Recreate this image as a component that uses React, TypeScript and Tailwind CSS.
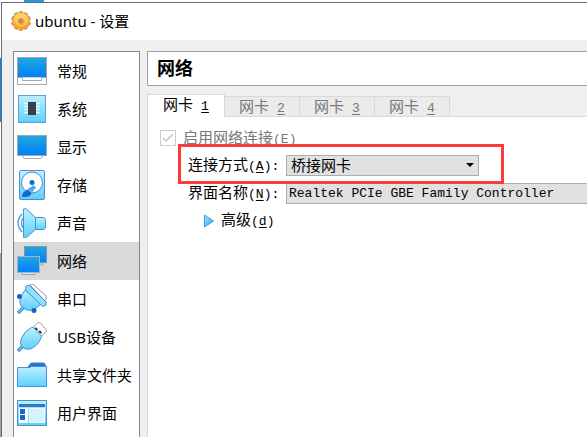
import React, { useState } from "react";

const sky = "#bdf1fd";
const cyan = "#5ccffb";
const edge = "#4a90d0";

function Defs() {
  return (
    <svg width="0" height="0" className="absolute" aria-hidden="true">
      <defs>
        <linearGradient id="screen" x1="0" y1="0" x2="0" y2="1">
          <stop offset="0" stopColor="#23a6e0" />
          <stop offset="1" stopColor="#0080fa" />
        </linearGradient>
        <linearGradient id="ice" x1="0" y1="0" x2="0" y2="1">
          <stop offset="0" stopColor={sky} />
          <stop offset="1" stopColor={cyan} />
        </linearGradient>
        <linearGradient id="arrow" x1="0" y1="0" x2="1" y2="1">
          <stop offset="0" stopColor="#a8ecfd" />
          <stop offset="1" stopColor="#2a9df0" />
        </linearGradient>
        <linearGradient id="gear" x1="0" y1="0" x2="0" y2="1">
          <stop offset="0" stopColor="#ffdc68" />
          <stop offset="1" stopColor="#f49a26" />
        </linearGradient>
      </defs>
    </svg>
  );
}

const icons: Record<string, React.ReactNode> = {
  general: (
    <>
      <rect x="0.5" y="1.5" width="29" height="27" fill="#fff" stroke="#a8a8a8" />
      <rect x="0.5" y="1.5" width="29" height="20" fill="url(#screen)" stroke="#a0a6aa" />
      <path d="M5.5 21.5v3h19v-3" fill="#fff" stroke="#a8a8a8" />
    </>
  ),
  system: (
    <>
      <rect x="1.5" y="1.5" width="27" height="27" fill="url(#ice)" stroke="#5b9fdc" />
      <path d="M7.500 9.500h15M7.500 12.500h15M7.500 15.500h15M7.500 18.500h15" stroke="#effcff" strokeWidth="1.300" />
      <rect x="11" y="8" width="8" height="13" fill="#37404c" />
    </>
  ),
  display: (
    <>
      <path d="M5 23.5l2 3h17l2-3" fill="#fff" stroke="#a0a6aa" />
      <rect x="0.5" y="3.5" width="29" height="20" fill="url(#screen)" stroke="#a0a6aa" />
    </>
  ),
  storage: (
    <>
      <rect x="2.5" y="0.5" width="25" height="29" rx="1.5" fill="url(#ice)" stroke={edge} />
      <circle cx="15" cy="12.5" r="10.5" fill="#fff" stroke="#4a86c8" />
      <path d="M16.500 15L19 17.500 13 25.500q-4 2.500-8 1 0-4 4-6z" fill="#1268cf" />
      <path d="M16.500 15L19 17.500l-4 5-4.500-3.500z" fill="#4aa6ea" stroke="#fff" strokeWidth="0.600" />
      <circle cx="15" cy="12.500" r="2.500" fill="#1268cf" />
    </>
  ),
  audio: (
    <>
      <path d="M5 6q-8 9 0 18M6 10q-3 5 0 10" fill="none" stroke="#4f93d2" strokeWidth="1.3" />
      <path d="M17 9.5h10l1.500 2v8l-1.500 2H17z" fill="url(#ice)" stroke={edge} />
      <path d="M6.500 1q3-1 4 1l8 7.500v12l-8 7q-2 2-4 1z" fill="url(#ice)" stroke={edge} />
    </>
  ),
  network: (
    <>
      <path d="M22 17h4v2h-4z" fill="#d8ecff" stroke="#8aa2b8" />
      <rect x="7.500" y="0.500" width="22" height="16" fill="url(#screen)" stroke="#8496a6" />
      <path d="M4 26l1 2.500h13l1-2.500z" fill="#d8ecff" stroke="#8aa2b8" />
      <rect x="0.500" y="10.500" width="22" height="16" fill="url(#screen)" stroke="#9db6cc" />
    </>
  ),
  serial: (
    <>
      <path d="M13 1q2-2 4 0l12 11q1 2-1 5z" fill="#fff" stroke="#9a9a9a" />
      <path d="M7 23l-6 6" stroke={edge} strokeWidth="3.5" />
      <path d="M7 23l-5 5" stroke={cyan} strokeWidth="1.5" />
      <path d="M8 6L4 12q-3 8 2 12 6 4 12 1l6-5z" fill="url(#ice)" stroke={edge} />
      <path d="M8.500 4.500q0-4 4-3L29 18v3q-2 2-4 1L8.500 6z" fill="#8be2fd" stroke={edge} />
      <circle cx="2.500" cy="12.500" r="2.500" fill="#0d62d0" />
      <circle cx="17" cy="26.500" r="2.500" fill="#0d62d0" />
    </>
  ),
  usb: (
    <>
      <path d="M15 6.500l6-6q1.500-.5 2.500.5l6 7q.5 1-.5 2l-6 5z" fill="#fff" stroke="#9a9a9a" />
      <path d="M18 6l2.500 2M22 9l2.500 2" stroke="#333" strokeWidth="2" />
      <path d="M5 25l-4 4" stroke={edge} strokeWidth="3.5" />
      <path d="M6 24l-4 4" stroke={cyan} strokeWidth="1.5" />
      <path d="M14.500 5.500q1.500-.5 2.500.5l7 7.500q1 1 0 2.500-3 8-11 11-5 1-8-2-3-4-.5-9 3-7 10-10.500z" fill="url(#ice)" stroke={edge} />
    </>
  ),
  folder: (
    <>
      <path d="M11 7l3-4h13l2 3v3H11z" fill="#2472cf" stroke="#3b83d2" />
      <path d="M0.5 7.5h12l2-1h15v20h-29z" fill="url(#ice)" stroke={edge} />
    </>
  ),
  ui: (
    <>
      <rect x="0.5" y="2.5" width="29" height="25" fill="url(#ice)" stroke={edge} />
      <path d="M2 6h26v3H2z" fill="#2d78cc" />
      <path d="M2 10h9v15H2z" fill="#fff" />
      <path d="M12.500 10.500h15v14h-15z" fill="#d3f3fd" stroke="#eefcff" />
      <path d="M3 11h5v5H3zM3 17h5v5H3z" fill="#1268cf" />
    </>
  ),
};

const sections = [
  { id: "general", label: "常规" },
  { id: "system", label: "系统" },
  { id: "display", label: "显示" },
  { id: "storage", label: "存储" },
  { id: "audio", label: "声音" },
  { id: "network", label: "网络" },
  { id: "serial", label: "串口" },
  { id: "usb", label: "USB设备" },
  { id: "folder", label: "共享文件夹" },
  { id: "ui", label: "用户界面" },
];

const mono = "font-['Liberation_Mono','Noto_Sans_CJK_SC',monospace] text-[13px]";

function Mnemonic({ letter }: { letter: string }) {
  return (
    <span className={mono}>
      (<span className="underline underline-offset-2">{letter}</span>)
    </span>
  );
}

function GearIcon() {
  const teeth = [0, 36, 72, 108, 144, 180, 216, 252, 288, 324];
  return (
    <svg viewBox="0 0 20 20" className="size-5 shrink-0" aria-hidden="true">
      {teeth.map((a) => (
        <rect key={a} x="8" y="0.5" width="4" height="4" rx="1.5" fill="#f3a53c" stroke="#c27a3c" strokeWidth="0.8" transform={`rotate(${a} 10 10)`} />
      ))}
      <circle cx="10" cy="10" r="8" fill="url(#gear)" />
      <circle cx="10" cy="10" r="5" fill="none" stroke="#ffe28a" strokeWidth="0.8" />
      <circle cx="10" cy="10" r="2" fill="#b9a08a" stroke="#c8701f" />
    </svg>
  );
}

export default function App() {
  const [section, setSection] = useState("network");
  const [tab, setTab] = useState(1);

  return (
    <div className="flex h-screen flex-col overflow-hidden bg-white font-['Noto_Sans','Noto_Sans_CJK_SC',sans-serif] text-[15px] text-black">
      <Defs />
      <div className="flex h-[2px] shrink-0 pl-6" aria-hidden="true">
        <div className="h-full w-5 bg-[#1e9fe0]" />
      </div>
      <div className="flex min-h-0 flex-1">
        <div className="flex w-px shrink-0 flex-col bg-white pt-14" aria-hidden="true">
          <div className="h-16 bg-[#0f84e8]" />
          <div className="mt-[131px] flex-1 bg-[#a0a0a0]" />
        </div>
        <div className="flex min-w-0 flex-1 flex-col border-t border-l border-[#6b6b6b] bg-[#efefef]">
          <header className="flex h-[37px] shrink-0 items-center gap-1 bg-white pb-0.5 pl-[9px]">
            <GearIcon />
            <h1 className="leading-5">ubuntu - 设置</h1>
          </header>
          <div className="flex min-h-0 flex-1 gap-[7px] pt-[11px] pl-[11px]">
            <nav className="w-[127px] shrink-0 border border-b-0 border-[#828790] bg-white">
              {sections.map((s) => (
                <button
                  key={s.id}
                  type="button"
                  onClick={() => setSection(s.id)}
                  className={`flex h-[38px] w-full items-center gap-[10px] pl-[3px] text-left leading-5 whitespace-nowrap ${section === s.id ? "bg-[#d9d9d9]" : ""}`}
                >
                  <svg viewBox="0 0 30 30" className="size-[30px] shrink-0" aria-hidden="true">
                    {icons[s.id]}
                  </svg>
                  {s.label}
                </button>
              ))}
            </nav>
            <main className="flex min-w-0 flex-1 flex-col">
              <div className="flex h-[35px] shrink-0 items-center border border-r-0 border-[#a0a0a0] bg-white pb-0.5 pl-[9px]">
                <h2 className="text-lg leading-6 font-bold">网络</h2>
              </div>
              <div className="relative z-10 mt-2 -mb-px flex shrink-0 items-end" role="tablist">
                {[1, 2, 3, 4].map((n) => (
                  <button
                    key={n}
                    type="button"
                    role="tab"
                    aria-selected={tab === n}
                    onClick={() => setTab(n)}
                    className={`flex items-baseline justify-center gap-2 border border-[#d9d9d9] leading-[18px] ${
                      tab === n ? "h-[23px] w-[78px] border-b-0 bg-white" : "h-[21px] w-[75px] border-l-0 bg-[#ebebeb] text-[#787878]"
                    }`}
                  >
                    网卡 <span className={`${mono} underline underline-offset-2`}>{n}</span>
                  </button>
                ))}
              </div>
              <section className="min-h-0 flex-1 border-t border-l border-[#d9d9d9] bg-white pt-[9px] pl-3">
                <label className="flex h-6 items-center gap-[7px] text-[#787878]">
                  <span className="grid size-4 place-items-center">
                    <input type="checkbox" defaultChecked disabled className="col-start-1 row-start-1 size-4 appearance-none border border-[#cccccc] bg-white" />
                    <svg viewBox="0 0 16 16" className="pointer-events-none col-start-1 row-start-1 size-4" aria-hidden="true">
                      <path d="M3 8l3 3 7-7" fill="none" stroke="#c4c4c4" strokeWidth="1.5" />
                    </svg>
                  </span>
                  <span className="leading-5">
                    启用网络连接
                    <Mnemonic letter="E" />
                  </span>
                </label>
                <div className="relative grid auto-rows-[21px] grid-cols-[98px_1fr] gap-y-[7px] pt-[5px] pl-7">
                  <label htmlFor="attached" className="leading-[18px]">
                    连接方式
                    <Mnemonic letter="A" />
                    <span className={mono}>:</span>
                  </label>
                  <div className="relative w-[193px]">
                    <select id="attached" className="block h-[21px] w-full appearance-none border border-[#adadad] bg-[#e1e1e1] pl-1 leading-[19px]">
                      <option>桥接网卡</option>
                    </select>
                    <svg viewBox="0 0 8 4" className="pointer-events-none absolute top-2 right-[5px] h-1 w-2" aria-hidden="true">
                      <path d="M0 0h8L4 4z" />
                    </svg>
                  </div>
                  <label htmlFor="adapter" className="leading-[18px]">
                    界面名称
                    <Mnemonic letter="N" />
                    <span className={mono}>:</span>
                  </label>
                  <select id="adapter" className={`${mono} block h-[21px] w-full min-w-0 appearance-none border border-r-0 border-[#adadad] bg-[#e1e1e1] pl-0.5 leading-[19px]`}>
                    <option>Realtek PCIe GBE Family Controller</option>
                  </select>
                  <div className="pointer-events-none absolute -top-1.5 left-[18px] h-10 w-[326px] border-3 border-[#fc3a3a]" aria-hidden="true" />
                </div>
                <button type="button" className="mt-[5px] ml-11 flex items-center gap-[7px] leading-5">
                  <svg viewBox="0 0 10 14" className="h-[14px] w-[10px]" aria-hidden="true">
                    <path d="M0.5 1v12L9.5 7z" fill="url(#arrow)" stroke="#3d9be0" />
                  </svg>
                  <span>
                    高级
                    <Mnemonic letter="d" />
                  </span>
                </button>
              </section>
            </main>
          </div>
        </div>
      </div>
    </div>
  );
}
